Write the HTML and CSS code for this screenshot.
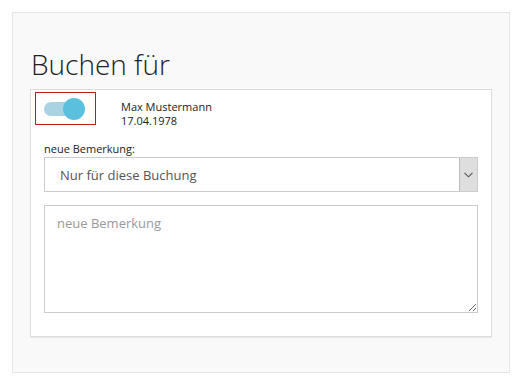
FILE: index.html
```html
<!DOCTYPE html>
<html lang="de">

<head>
    <meta charset="UTF-8">
    <meta name="viewport" content="width=device-width, initial-scale=1.0">
    <title>Buchen für</title>
    <link rel="stylesheet" href="styles.css">
</head>

<body>

    <div class="panel">
        <h1>Buchen für</h1>

        <div class="card">
            <div class="person-row">
                <div class="toggle-box">
                    <div class="toggle">
                        <span class="toggle-track"></span>
                        <span class="toggle-knob"></span>
                    </div>
                </div>
                <div class="person">
                    <div>Max Mustermann</div>
                    <div>17.04.1978</div>
                </div>
            </div>

            <div class="form-group">
                <label for="scope">neue Bemerkung:</label>
                <div class="select-wrap">
                    <select id="scope">
                        <option>Nur für diese Buchung</option>
                    </select>
                    <span class="select-arrow">
                        <svg width="9" height="6" viewBox="0 0 9 6">
                            <polyline points="0.5,0.8 4.5,4.8 8.5,0.8" fill="none" stroke="#555" stroke-width="1.1" />
                        </svg>
                    </span>
                </div>
                <textarea placeholder="neue Bemerkung"></textarea>
            </div>
        </div>
    </div>

</body>

</html>
```

FILE: styles.css
```css
body {
    font-family: "Open Sans", Arial, sans-serif;
    margin: 0;
    padding: 12px;
    background-color: #fff;
}

.panel {
    width: 462px;
    background-color: #f9f9f9;
    border: 1px solid #e6e6e6;
    padding: 34px 17px 35px 17px;
}

h1 {
    font-size: 28px;
    font-weight: 300;
    line-height: 34px;
    color: #222;
    margin: 0 0 8px 1px;
}

.card {
    background-color: #fff;
    border: 1px solid #ddd;
    box-shadow: 0 1px 1px rgba(0, 0, 0, 0.06);
    padding: 2px 13px 23px 4px;
}

.person-row {
    display: flex;
    align-items: flex-start;
}

.toggle-box {
    width: 59px;
    height: 31px;
    border: 1px solid #c4161c;
    display: flex;
    align-items: center;
}

.toggle {
    position: relative;
    width: 41px;
    height: 22px;
    margin-left: 8px;
    display: flex;
    align-items: center;
}

.toggle-track {
    width: 38px;
    height: 14px;
    border-radius: 7px;
    background-color: #a9d3e2;
}

.toggle-knob {
    position: absolute;
    right: 0;
    top: 0;
    width: 22px;
    height: 22px;
    border-radius: 50%;
    background-color: #5bc0de;
}

.person {
    font-size: 11px;
    line-height: 14px;
    color: #222;
    margin: 8px 0 0 25px;
}

.form-group {
    margin-left: 9px;
    margin-top: 13px;
}

label {
    display: block;
    font-size: 11px;
    line-height: 15px;
    color: #222;
}

.select-wrap {
    display: flex;
    height: 33px;
    border: 1px solid #ccc;
    margin-top: 1px;
}

select {
    flex: 1;
    appearance: none;
    border: none;
    background: #fff;
    font-family: "Open Sans", Arial, sans-serif;
    font-size: 13px;
    color: #555;
    padding: 0 15px;
    outline: none;
}

.select-arrow {
    width: 17px;
    background-color: #dedede;
    border-left: 1px solid #bbb;
    display: flex;
    align-items: center;
    justify-content: center;
}

textarea {
    display: block;
    box-sizing: border-box;
    width: 100%;
    height: 108px;
    margin-top: 13px;
    border: 1px solid #ccc;
    padding: 8px 12px;
    font-family: "Open Sans", Arial, sans-serif;
    font-size: 13px;
    line-height: 18px;
    color: #555;
    resize: vertical;
    outline: none;
}

textarea::placeholder {
    color: #999;
}
```
